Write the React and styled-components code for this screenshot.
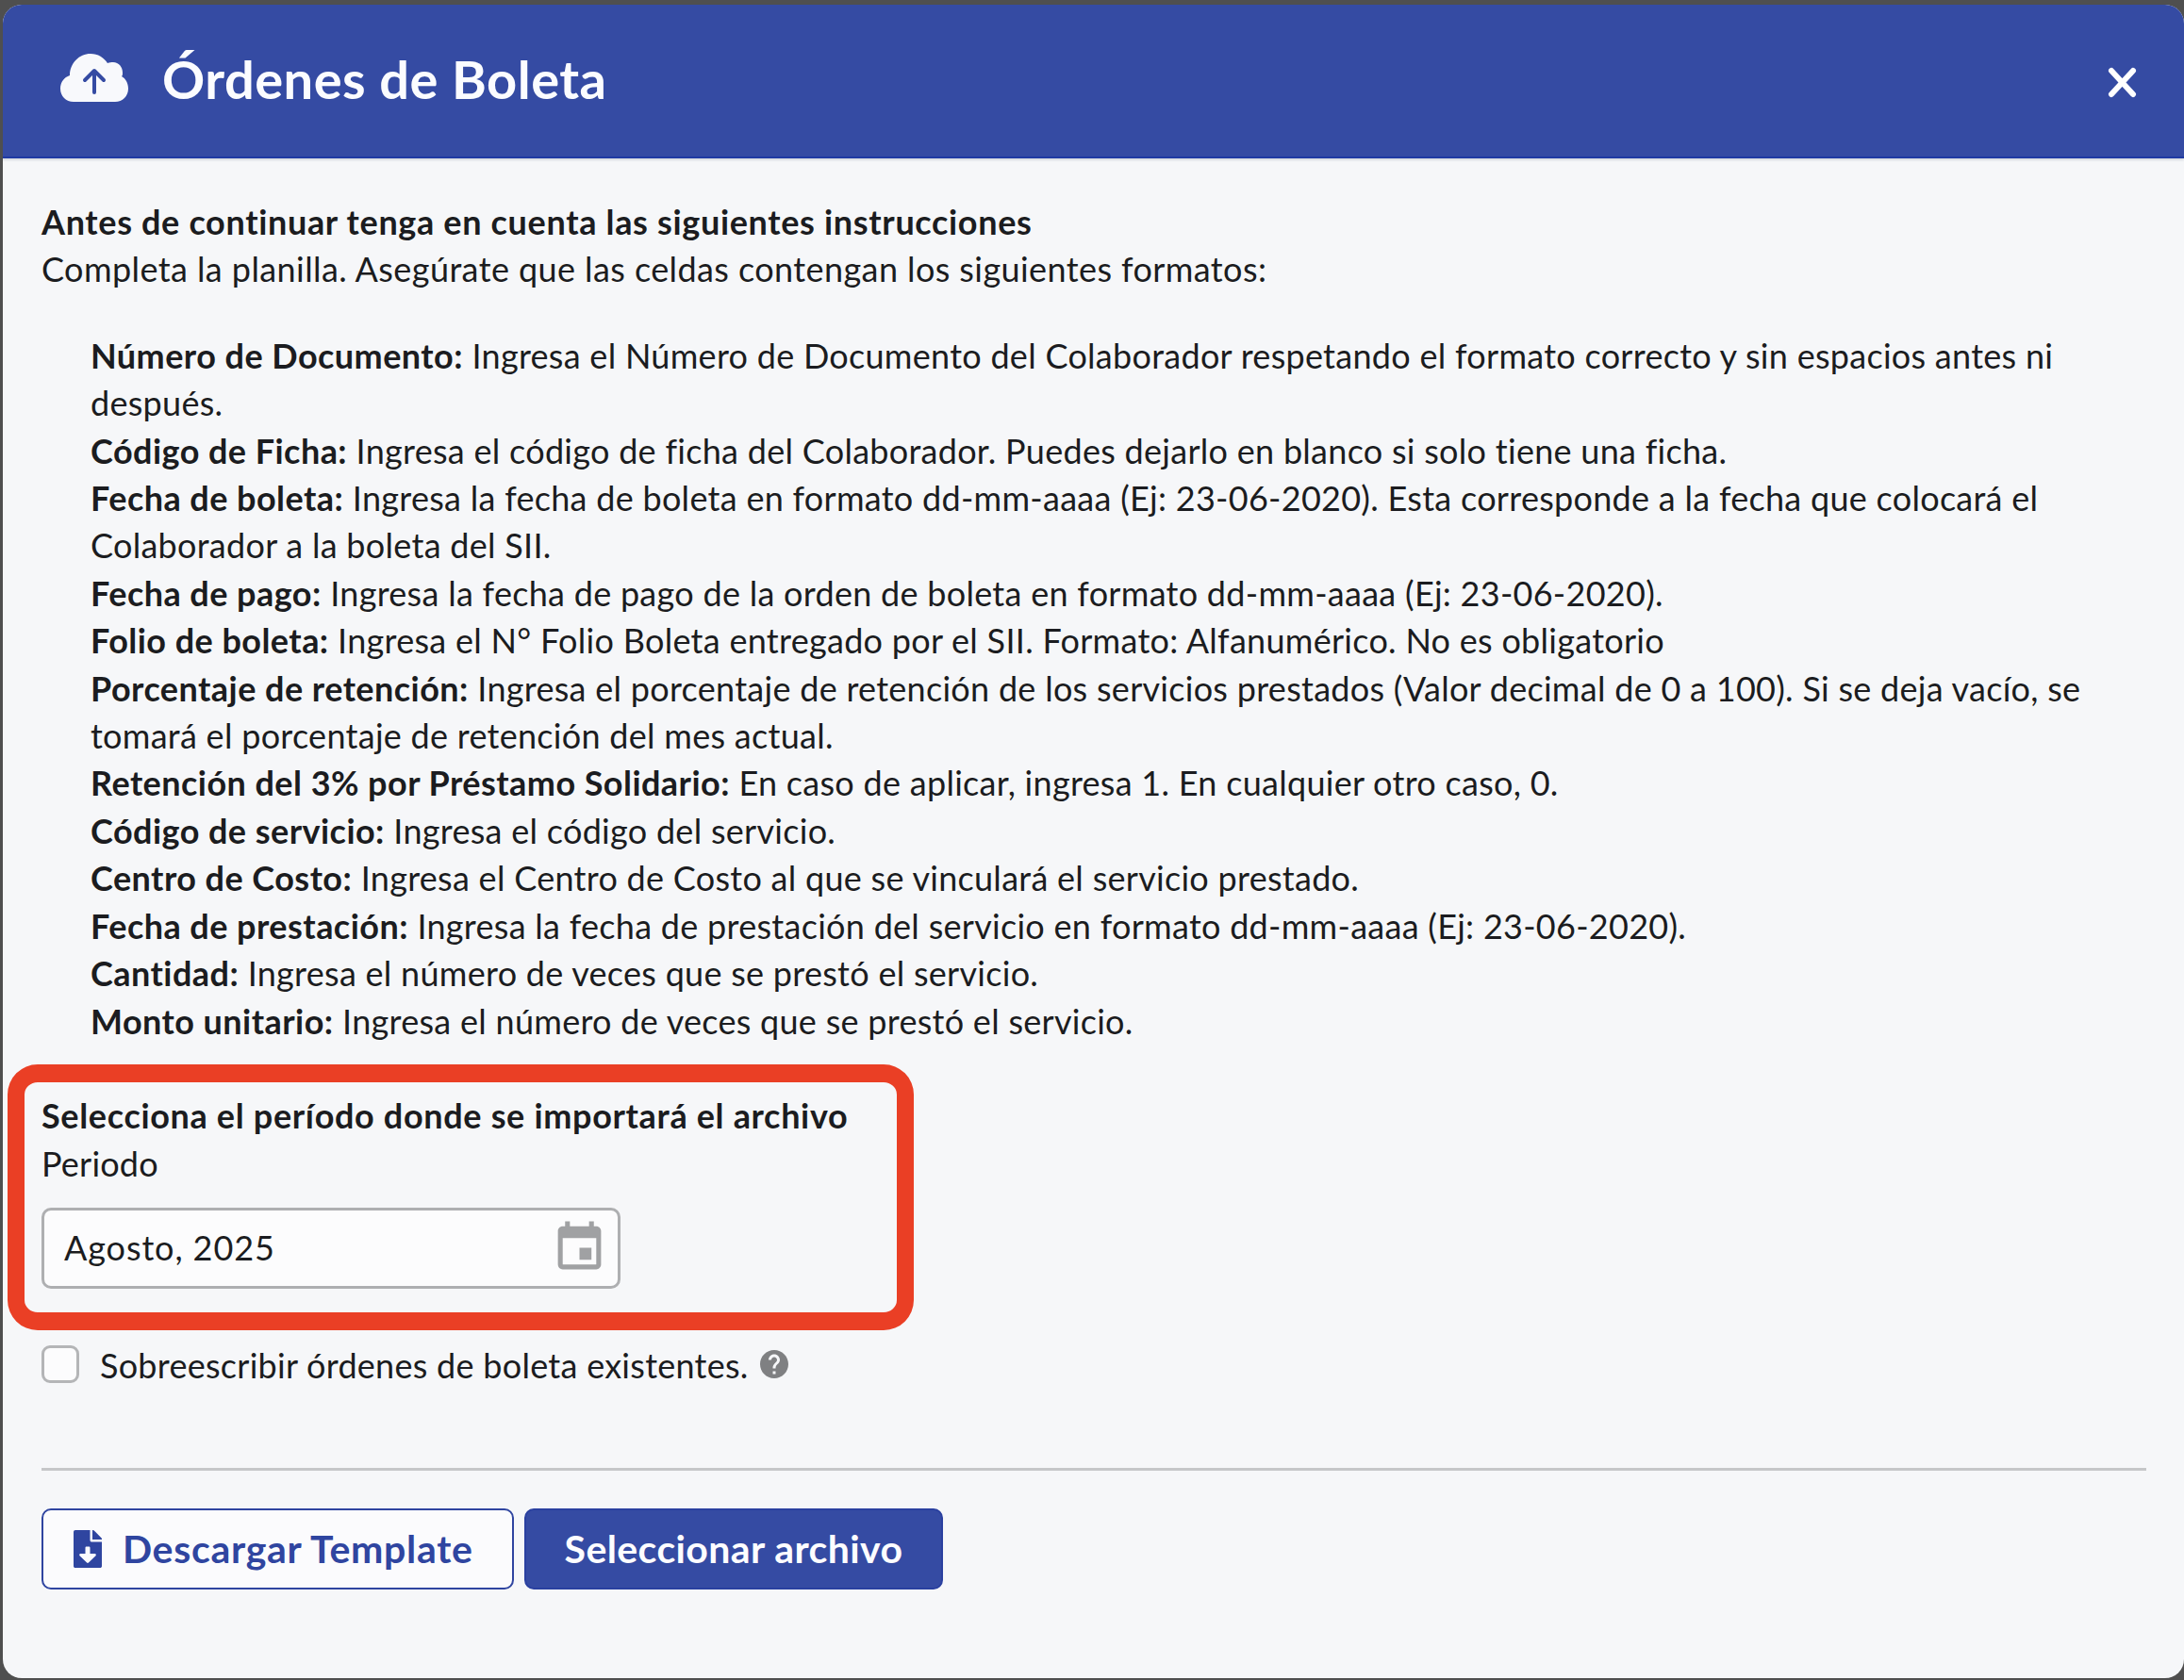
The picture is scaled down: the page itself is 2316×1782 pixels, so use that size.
import React from 'react';
import styled, { createGlobalStyle } from 'styled-components';
import { MdEvent, MdHelp } from 'react-icons/md';
import { FaFileDownload } from 'react-icons/fa';

const GlobalStyle = createGlobalStyle`
  * {
    box-sizing: border-box;
  }
  html,
  body {
    margin: 0;
    padding: 0;
    background: #4f4f4f;
  }
  body {
    font-family: 'Lato', 'Noto Sans', sans-serif;
    color: #1b1c20;
  }
`;

const instructions = [
  ['Número de Documento:', 'Ingresa el Número de Documento del Colaborador respetando el formato correcto y sin espacios antes ni después.'],
  ['Código de Ficha:', 'Ingresa el código de ficha del Colaborador. Puedes dejarlo en blanco si solo tiene una ficha.'],
  ['Fecha de boleta:', 'Ingresa la fecha de boleta en formato dd-mm-aaaa (Ej: 23-06-2020). Esta corresponde a la fecha que colocará el Colaborador a la boleta del SII.'],
  ['Fecha de pago:', 'Ingresa la fecha de pago de la orden de boleta en formato dd-mm-aaaa (Ej: 23-06-2020).'],
  ['Folio de boleta:', 'Ingresa el N° Folio Boleta entregado por el SII. Formato: Alfanumérico. No es obligatorio'],
  ['Porcentaje de retención:', 'Ingresa el porcentaje de retención de los servicios prestados (Valor decimal de 0 a 100). Si se deja vacío, se tomará el porcentaje de retención del mes actual.'],
  ['Retención del 3% por Préstamo Solidario:', 'En caso de aplicar, ingresa 1. En cualquier otro caso, 0.'],
  ['Código de servicio:', 'Ingresa el código del servicio.'],
  ['Centro de Costo:', 'Ingresa el Centro de Costo al que se vinculará el servicio prestado.'],
  ['Fecha de prestación:', 'Ingresa la fecha de prestación del servicio en formato dd-mm-aaaa (Ej: 23-06-2020).'],
  ['Cantidad:', 'Ingresa el número de veces que se prestó el servicio.'],
  ['Monto unitario:', 'Ingresa el número de veces que se prestó el servicio.'],
];

const App = () => {
  return (
    <>
      <GlobalStyle />
      <Page>
        <Modal>
          <Header>
            <CloudIcon viewBox='0 0 72 51'>
              <path
                fill='#f8f9fc'
                d='M14 51C6 51 0 45 0 37c0-7 4-12 10-14C10 10 20 0 32 0c8 0 14 4 18 10 2-1 4-1 6-1 6 0 10 5 10 11 0 2 0 3-1 4 4 2 7 7 7 13 0 8-6 14-14 14z'
              />
              <path
                fill='none'
                stroke='#354ba3'
                strokeWidth='4'
                strokeLinecap='round'
                strokeLinejoin='round'
                d='M36 41V19M26 28l10-10 10 10'
              />
            </CloudIcon>
            <Title>Órdenes de Boleta</Title>
            <CloseButton aria-label='Cerrar'>
              <svg viewBox='0 0 31 33' width='31' height='33'>
                <path
                  stroke='#fff'
                  strokeWidth='6'
                  strokeLinecap='round'
                  d='M4 4l23 25M27 4L4 29'
                />
              </svg>
            </CloseButton>
          </Header>
          <Body>
            <Line $bold>Antes de continuar tenga en cuenta las siguientes instrucciones</Line>
            <Line>Completa la planilla. Asegúrate que las celdas contengan los siguientes formatos:</Line>
            <List>
              {instructions.map(([label, text]) => (
                <ListLine key={label}>
                  <strong>{label}</strong> {text}
                </ListLine>
              ))}
            </List>
            <Highlight>
              <Line $bold>Selecciona el período donde se importará el archivo</Line>
              <FieldLabel>Periodo</FieldLabel>
              <DateInput>
                <InputValue>Agosto, 2025</InputValue>
                <MdEvent size={61} color='#a0a1a3' />
              </DateInput>
            </Highlight>
            <CheckRow>
              <Checkbox />
              <CheckLabel>Sobreescribir órdenes de boleta existentes.</CheckLabel>
              <MdHelp size={36} color='#7f8082' />
            </CheckRow>
            <Divider />
            <Actions>
              <Button>
                <FaFileDownload size={40} />
                Descargar Template
              </Button>
              <Button $primary>Seleccionar archivo</Button>
            </Actions>
          </Body>
        </Modal>
      </Page>
    </>
  );
};

const Page = styled.div`
  height: 1782px;
  padding: 5px 0 2px 3px;
  overflow: hidden;
`;

const Modal = styled.section`
  height: 100%;
  background: #f6f7f9;
  border-radius: 20px;
  overflow: hidden;
`;

const Header = styled.header`
  height: 163px;
  padding: 3px 50px 0 61px;
  display: flex;
  align-items: center;
  background: #354ba3;
  border-bottom: 2px solid #1f3aa3;
  box-shadow: 0 2px 2px #d6d9df;
`;

const CloudIcon = styled.svg`
  width: 72px;
  height: 51px;
  margin-bottom: 9px;
  flex: none;
`;

const Title = styled.h1`
  margin: 0 0 7px 36px;
  flex: 1;
  font-size: 56px;
  line-height: 66px;
  font-weight: 700;
  letter-spacing: 0.5px;
  color: #fbfcff;
`;

const CloseButton = styled.button`
  padding: 0;
  border: none;
  background: transparent;
  display: flex;
`;

const Body = styled.div`
  padding: 42px 40px 0 41px;
`;

const Line = styled.div`
  font-size: 36px;
  line-height: 50.4px;
  letter-spacing: ${(props) => (props.$bold ? '0.66px' : '0.41px')};
  font-weight: ${(props) => (props.$bold ? 700 : 400)};
`;

const ListLine = styled(Line)`
  letter-spacing: 0.28px;
  strong {
    font-weight: 700;
    letter-spacing: 0.45px;
  }
`;

const FieldLabel = styled(Line)`
  margin-top: 1px;
  letter-spacing: 0.2px;
`;

const List = styled.div`
  margin-top: 41px;
  padding-left: 52px;
`;

const Highlight = styled.div`
  width: 961px;
  height: 282px;
  margin: 21px 0 0 -36px;
  padding: 10px 0 0 18px;
  border: 18px solid #ea3f25;
  border-width: 19px 18px;
  border-radius: 32px;
`;

const DateInput = styled.div`
  width: 614px;
  height: 86px;
  margin-top: 21px;
  padding: 0 10px 0 21px;
  display: flex;
  align-items: center;
  justify-content: space-between;
  background: #fcfcfd;
  border: 3px solid #aeafb1;
  border-radius: 10px;
  font-size: 36px;
  letter-spacing: 0.9px;
`;

const InputValue = styled.span`
  margin-bottom: 2px;
`;

const CheckRow = styled.div`
  margin-top: 16px;
  height: 40px;
  display: flex;
  align-items: center;
`;

const Checkbox = styled.span`
  width: 40px;
  height: 40px;
  flex: none;
  background: #fcfcfd;
  border: 3px solid #b4b5b7;
  border-radius: 9px;
`;

const CheckLabel = styled.span`
  margin: 2px 9px 0 22px;
  font-size: 36px;
  letter-spacing: 0.27px;
`;

const Divider = styled.hr`
  margin: 90px 0 0;
  border: none;
  border-top: 3px solid #c6c7c9;
`;

const Actions = styled.div`
  margin-top: 40px;
  display: flex;
  gap: 11px;
`;

const Button = styled.button`
  height: 86px;
  width: ${(props) => (props.$primary ? '444px' : '501px')};
  padding: ${(props) => (props.$primary ? '0' : '0 0 0 27px')};
  display: flex;
  align-items: center;
  justify-content: ${(props) => (props.$primary ? 'center' : 'flex-start')};
  gap: 17px;
  font-family: inherit;
  font-size: 41px;
  letter-spacing: ${(props) => (props.$primary ? '0.4px' : '0.7px')};
  font-weight: 700;
  color: ${(props) => (props.$primary ? '#fdfdff' : '#2f45a0')};
  background: ${(props) => (props.$primary ? '#354ba3' : '#fbfbfd')};
  border: 2px solid ${(props) => (props.$primary ? '#2a40a0' : '#2f45a0')};
  border-radius: 10px;
`;

export default App;
